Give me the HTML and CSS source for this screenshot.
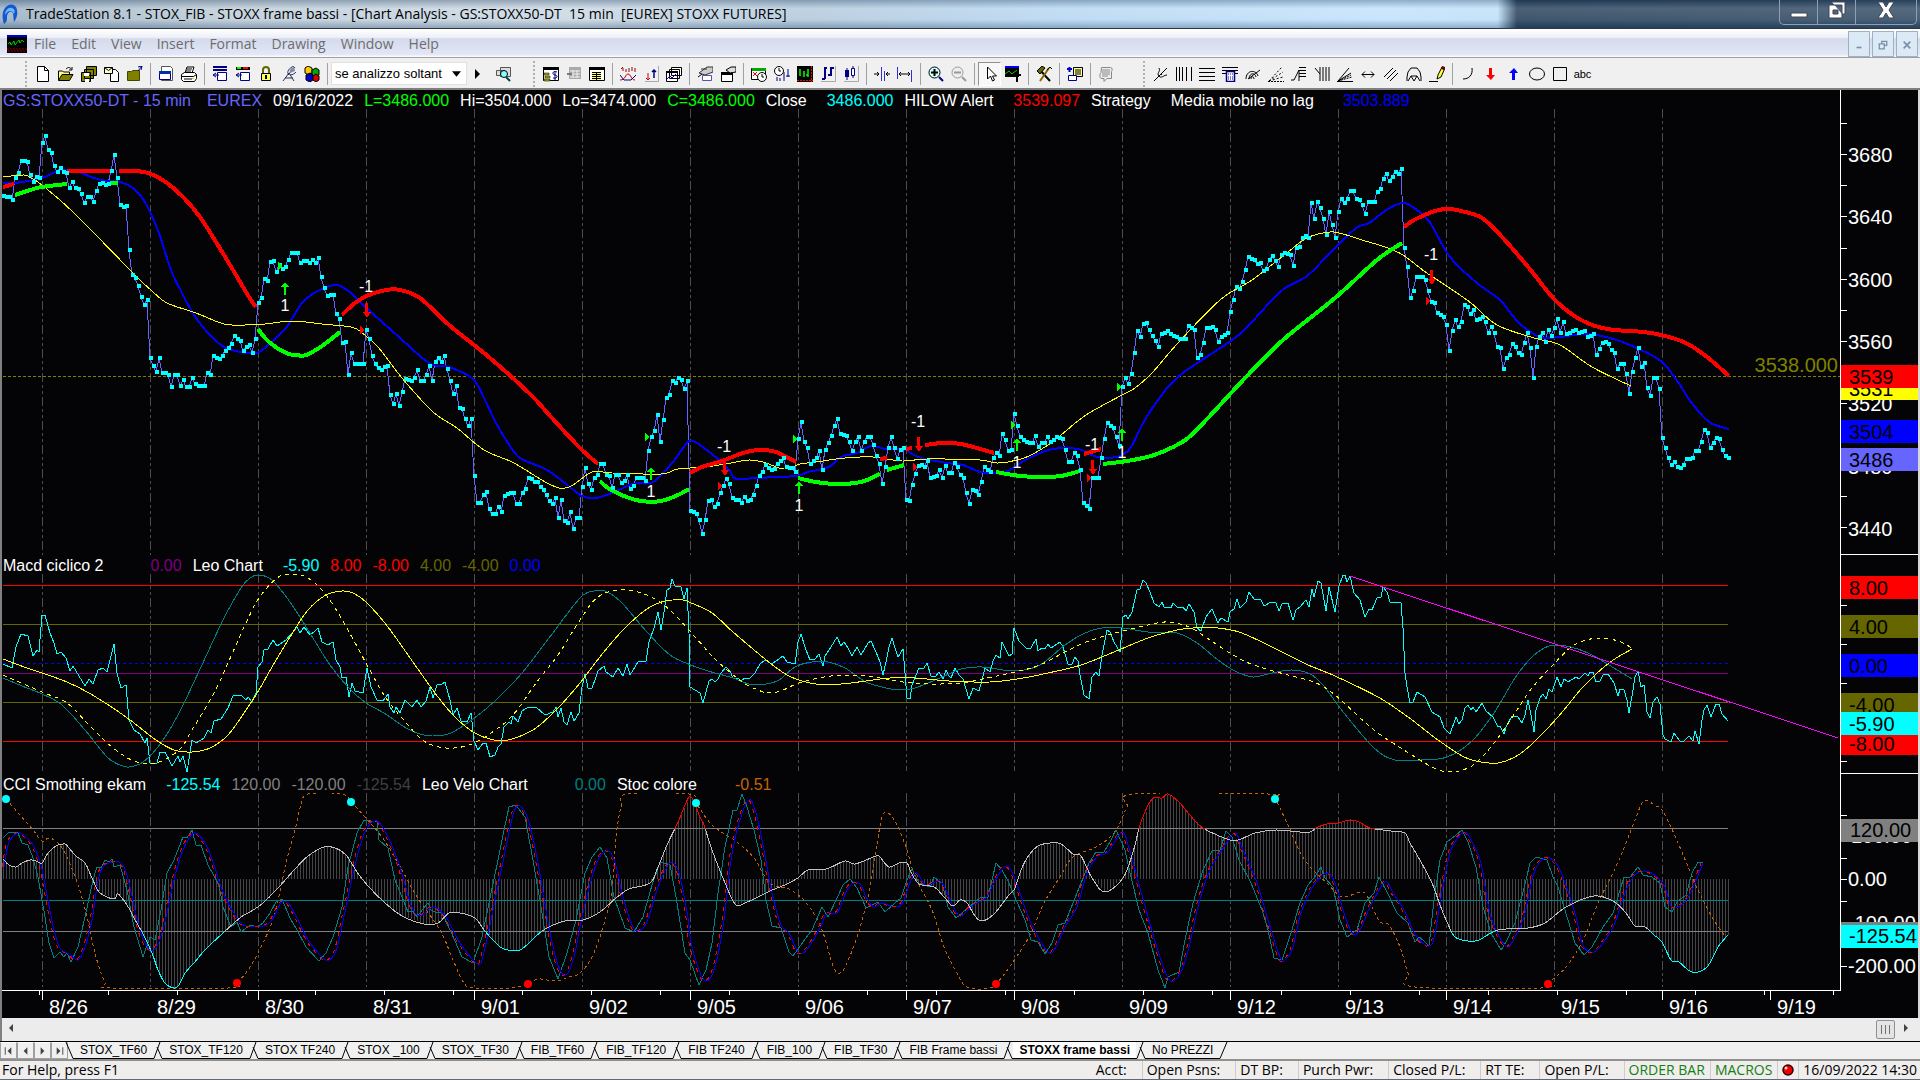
FILE: index.html
```
<!DOCTYPE html>
<html lang="en">

<head>
  <meta charset="UTF-8">
  <meta name="viewport" content="width=device-width, initial-scale=1.0">
  <title>TradeStation 8.1 - STOX_FIB</title>
  <link rel="stylesheet" href="styles.css">
</head>

<body>
  <!-- Toolbar icon set -->
  <svg class="sprite" aria-hidden="true">
    <symbol id="i-new" viewBox="0 0 16 16"><path d="M2.500 .5h7l4 4v11h-11z" fill="#fff" stroke="#000"/><path d="M9.500 .5v4h4" fill="none" stroke="#000"/></symbol>
    <symbol id="i-open" viewBox="0 0 16 16"><path d="M.5 14V5h4l1 1h6v2" fill="#ff8" stroke="#000"/><path d="M.5 14.500 4 8.500h11l-3.500 6z" fill="#808000" stroke="#000"/><path d="M8 3c2-2 4-2 5 0m1-2v3h-3" fill="none" stroke="#000"/></symbol>
    <symbol id="i-saveall" viewBox="0 0 16 16"><path d="M5.500 .5h10v9h-10zM3.500 3.500h9v9h-9zM.5 6.500h9v9h-9z" fill="#808000" stroke="#000"/><path d="M3 7h5v3H3zM4 13h4v3H4z" fill="#fff"/></symbol>
    <symbol id="i-mail" viewBox="0 0 16 16"><path d="M6.500 3.500h5l3 3v9h-8z" fill="#fff" stroke="#000"/><path d="M.5 1.500h8v6h-8z" fill="#ffc" stroke="#000"/><path d="m.5 1.500 4 3 4-3" fill="none" stroke="#000"/></symbol>
    <symbol id="i-folder" viewBox="0 0 16 16"><path d="M.5 5.500h4l1-1h7v10H.5z" fill="#808000" stroke="#440"/><path d="m11 1 4-1-1 4M15 0l-4 5" fill="none" stroke="#000080"/></symbol>
    <symbol id="i-window" viewBox="0 0 16 16"><path d="M3.500 .5h9l2 2v12h-11z" fill="#fff" stroke="#555"/><path d="M1.500 5.500h11v8h-11z" fill="#fff" stroke="#000080"/><path d="M1 5h12v3H1z" fill="#0030a0"/></symbol>
    <symbol id="i-print" viewBox="0 0 16 16"><path d="m4 7 2-6h7l-2 6M.5 8.500l3-2h10l2 2v4l-2 3h-11l-2-2z" fill="#fff" stroke="#000"/><path d="M.5 10.500h12l3-2M6 3h5M5 5h5m-7 8h8" stroke="#000" fill="none"/><path d="M11 12h2v1h-2z" fill="#cc0"/></symbol>
    <symbol id="i-insert" viewBox="0 0 16 16"><path d="M1 1h14M1 4h14" stroke="#000080" stroke-width="2"/><path d="M5.500 6.500h9v8h-9zM1 9h6M1 9l3-2M1 9l3 2" fill="#fff" stroke="#000080"/></symbol>
    <symbol id="i-insert2" viewBox="0 0 16 16"><path d="M1 1h14v3H1z" fill="#000"/><path d="M2 1h4v2H2z" fill="#0f0"/><path d="M8 1h5v2H8z" fill="red"/><path d="M5.500 6.500h9v8h-9zM1 9h6M1 9l3-2M1 9l3 2" fill="#fff" stroke="#000080"/></symbol>
    <symbol id="i-lock" viewBox="0 0 16 16"><path d="M5 8V4c0-4 6-4 6 0v4" fill="none" stroke="#660" stroke-width="2"/><path d="M3.500 7.500h9v7h-9z" fill="#ff6" stroke="#000"/><path d="M8 9v4" stroke="#000" stroke-width="2"/></symbol>
    <symbol id="i-dish" viewBox="0 0 16 16"><path d="m2 15 6-8 5 8M4 12h8M8 9c-3-3 0-7 5-9M9 9c3 0 5-2 6-3M7 9l7-8" fill="none" stroke="#235"/><path d="M9 7c-1-3 1-5 4-6l1 4z" fill="#88a"/></symbol>
    <symbol id="i-cubes" viewBox="0 0 16 16"><path d="m1 2 3-2 4 2v5L5 9 1 7z" fill="#fc0" stroke="#000"/><path d="m8 4 4-2 3 2v5l-3 2-4-2z" fill="#0a0" stroke="#000"/><path d="m2 9 4-2 3 2v5l-3 2-4-2z" fill="#00c" stroke="#000"/><path d="m9 10 3-2 3 2v4l-3 2-3-2z" fill="#d00" stroke="#000"/></symbol>
    <symbol id="i-find" viewBox="0 0 16 16"><path d="M1.500 4.500h8v5h-8zM5.500 1.500h10v9h-10z" fill="#ddd" stroke="#555"/><circle cx="9" cy="8" r="3.500" fill="#8ff" stroke="#000"/><path d="m11 11 4 4" stroke="#045" stroke-width="2"/></symbol>
    <symbol id="i-money" viewBox="0 0 16 16"><path d="M.5 1.500h15v13H.5z" fill="#fff" stroke="#000"/><path d="M0 1h16v3H0z"/><path d="M1 7h5v2H1zm1 3h5v2H2zm-1 3h6v2H1z" fill="#aa0" stroke="#000" stroke-width=".5"/><path d="M14 6c-5-2-5 3-2 3s3 4-2 3m2-7v9" fill="none" stroke="#000080"/></symbol>
    <symbol id="i-grid" viewBox="0 0 16 16"><path d="M3 1h12v12H3z" fill="#aaa"/><path d="M4 5h10M4 8h10M4 11h10M7 4v8m4-8v8" stroke="#eee"/><path d="M1 7h5v2H1z" fill="#777"/></symbol>
    <symbol id="i-table" viewBox="0 0 16 16"><path d="M.5 1.500h15v13H.5z" fill="#fff" stroke="#000"/><path d="M0 1h16v3H0z"/><path d="M3 6h9v8H3z" fill="#ff6"/><path d="M3 6.500h9m-9 2h9m-9 2h9m-9 2h9M7.500 6v9" stroke="#000"/></symbol>
    <symbol id="i-study" viewBox="0 0 16 16"><path d="m1 3 2-2m0 4V2m3 4V3m3-1v4m3-5v4m3-3v4" stroke="#900" fill="none"/><path d="M0 14c6 0 5-6 8-6s3 6 7 6" fill="none" stroke="#c00"/><path d="m0 9 4 5h7l5-5" fill="none" stroke="#000080"/></symbol>
    <symbol id="i-updown" viewBox="0 0 16 16"><path d="M15.500 0v15.500H2" stroke="#aaa" fill="none"/><path d="M5 7v7m-2-2 2 2 2-2" stroke="#c00" fill="none"/><path d="M11 12V4M9 6l2-2 2 2" stroke="#000080" stroke-width="1.500" fill="none"/></symbol>
    <symbol id="i-stack" viewBox="0 0 16 16"><path d="M5.500 1.500h10v8h-10zM3.500 3.500h10v9h-10zM.5 5.500h11v10H.5z" fill="#fff" stroke="#000"/><path d="M0 5h12v2H0z"/><path d="m1 13 3-3 2 2 4-4" stroke="#00c" fill="none"/></symbol>
    <symbol id="i-hand" viewBox="0 0 16 16"><path d="m2 7 8-6h6v5l-8 3zM4 3h6" fill="#ccc" stroke="#333"/><path d="M5.500 9.500h9v5h-9z" fill="#fff" stroke="#55a"/><path d="m1 11 4-3" stroke="#000"/></symbol>
    <symbol id="i-hand2" viewBox="0 0 16 16"><path d="M1.500 6.500h11v9h-11z" fill="#fff" stroke="#000"/><path d="M1 6h12v3H1z" fill="#000"/><path d="m6 4 5-3h5v5l-6 1z" fill="#ddd" stroke="#000"/></symbol>
    <symbol id="i-calendar" viewBox="0 0 16 16"><path d="M.5 2.500h14v11H.5z" fill="#fff" stroke="#000"/><path d="M1 2h14v3H1z" fill="#0a0"/><path d="m2 6 4 4m0-4-4 4" stroke="red"/><circle cx="11" cy="11" r="4.500" fill="#fff" stroke="#000"/><path d="M11 8v3h2" stroke="#000" fill="none"/></symbol>
    <symbol id="i-clock" viewBox="0 0 16 16"><circle cx="5" cy="5" r="4.500" fill="#fff" stroke="#000"/><path d="M5 2v3h2" stroke="#000" fill="none"/><path d="M3 11v4m3-3v3m4-9v9m4-12v8m-2-1h4" stroke="#000080" fill="none"/></symbol>
    <symbol id="i-bars" viewBox="0 0 16 16"><path d="M0 0h16v16H0z"/><path d="M3 3v7m4-5v6m4-8v8m-2-2h2" stroke="#0f0" stroke-width="1.500"/><path d="M0 14.500h16M14.500 0v16" stroke="red" stroke-dasharray="2 1"/></symbol>
    <symbol id="i-ohlc" viewBox="0 0 16 16"><path d="M15.500 0v15.500H1" stroke="#aaa" fill="none"/><path d="M5 2v11m-3 0h3m-1-11h3M11 1v9M8 9h3m0-7h3" stroke="#000080" stroke-width="2" fill="none"/></symbol>
    <symbol id="i-candle" viewBox="0 0 16 16"><path d="M15.500 0v15.500H1" stroke="#aaa" fill="none"/><path d="M4 2v12M10 0v12" stroke="#000080"/><path d="M2 4h4v7H2z" fill="#000080"/><path d="M8.500 2.500h3v7h-3z" fill="#fff" stroke="#000080"/></symbol>
    <symbol id="i-narrow" viewBox="0 0 16 16"><path d="M0 8h5M3 6l2 2-2 2m13-2h-4m2-2-2 2 2 2" stroke="#000" fill="none"/><path d="M7.500 1v14m3-10v10" stroke="#3030d0"/></symbol>
    <symbol id="i-widen" viewBox="0 0 16 16"><path d="M2 8h11M4 6 2 8l2 2m7-4 2 2-2 2" stroke="#000" fill="none"/><path d="M.5 1v12m14-9v12" stroke="#3030d0"/></symbol>
    <symbol id="i-zoomin" viewBox="0 0 16 16"><circle cx="6.500" cy="6.500" r="5.500" fill="#cff" stroke="#000"/><path d="M3 6.500h7M6.500 3v7" stroke="#000" stroke-width="2"/><path d="m11 11 4 4" stroke="#000080" stroke-width="2"/></symbol>
    <symbol id="i-zoomout" viewBox="0 0 16 16"><circle cx="6.500" cy="6.500" r="5.500" fill="#eee" stroke="#999"/><path d="M3 6.500h7" stroke="#999" stroke-width="2"/><path d="m11 11 4 4" stroke="#999" stroke-width="2"/></symbol>
    <symbol id="i-pointer" viewBox="0 0 16 16"><path d="M5.500 1v12l3-3 2 5 2-1-2-4h4z" fill="#fff" stroke="#000"/></symbol>
    <symbol id="i-charttext" viewBox="0 0 16 16"><path d="M0 0h14v11H0z"/><path d="M0 0h14v2H0z" fill="#00f"/><path d="m0 8 4-3 3 3 5-4" stroke="#0c0" fill="none"/><path d="M8 9h8m-4 0v7" stroke="#000" stroke-width="2"/></symbol>
    <symbol id="i-tools" viewBox="0 0 16 16"><path d="m3 3 11 12" stroke="#000" stroke-width="2"/><path d="M1 5 6 0l3 2-5 6z" fill="#660" stroke="#000"/><path d="m13 2-9 13" stroke="#860" stroke-width="2"/><path d="m11 4 3-3 2 2" stroke="#000" fill="none"/></symbol>
    <symbol id="i-addsheet" viewBox="0 0 16 16"><path d="M0 3h5M2.500 1v5" stroke="#00c" stroke-width="2"/><path d="M6.500 1.500h9v9h-9z" fill="#ff9" stroke="#000"/><path d="M8 4h6M8 6h6M8 8h6" stroke="#000"/><path d="M1.500 9.500h8v5h-8z" fill="#fff" stroke="#000080"/></symbol>
    <symbol id="i-note" viewBox="0 0 16 16"><path d="M3.500 1.500h9c2 0 2 3 1 4v7H9l-3 3v-3H3c-2-2-1-5 0-6z" fill="#eee" stroke="#888"/><path d="M4 4h8M4 6h8M4 8h8m-8 2h6" stroke="#888"/></symbol>
    <symbol id="i-fork" viewBox="0 0 16 16"><path d="m1 15 5-5m0 0c-3-3 2-4 0-8m0 8c2 3 5-1 8-1M6 10l8-8M8 8l1 1" fill="none" stroke="#000"/></symbol>
    <symbol id="i-vlines" viewBox="0 0 16 16"><path d="M.5 1v14m3-14v14m3-14v14m4-14v14m5-14v14" stroke="#000"/></symbol>
    <symbol id="i-hlines" viewBox="0 0 16 16"><path d="M0 2.500h16m-16 4h16m-16 4h16m-16 4h16" stroke="#000"/></symbol>
    <symbol id="i-calc" viewBox="0 0 16 16"><path d="M0 1.500h16m-16 3h16m-16 3h16" stroke="#000"/><path d="M4.500 5.500h8v10h-8z" fill="#fff" stroke="#000080" stroke-width="1.500"/><path d="M6 8h5m-5 3h5m-5 2h5" stroke="#000080" stroke-dasharray="1 1"/></symbol>
    <symbol id="i-arcs" viewBox="0 0 16 16"><path d="M1 13c0-9 10-10 12-3M4 13c0-6 6-7 7-2M6 13c0-3 3-3 3 0M3 13 15 4" fill="none" stroke="#000"/></symbol>
    <symbol id="i-fan" viewBox="0 0 16 16"><path d="M0 15.500h16" stroke="#000" stroke-dasharray="2 1"/><path d="M1 15 14 1M1 15l14-9M1 15l14-4" stroke="#000" stroke-dasharray="2 2"/></symbol>
    <symbol id="i-levels" viewBox="0 0 16 16"><path d="M0 14h3l5-10v11M8 1.500h7M8 4.500h7m-7 3h7m-7 3h7" fill="none" stroke="#000"/></symbol>
    <symbol id="i-timefib" viewBox="0 0 16 16"><path d="m1 2 5 6V1m0 7v7m3-14v14m3-14v14m3-14v14" fill="none" stroke="#000"/></symbol>
    <symbol id="i-fan2" viewBox="0 0 16 16"><path d="M0 15.500h16M1 15 12 2M1 15l13-8" stroke="#000" fill="none"/><path d="m1 15 14-4M2 15l12-6" stroke="#000" stroke-dasharray="2 1"/></symbol>
    <symbol id="i-hline" viewBox="0 0 16 16"><path d="M2 8.500h12m-9-3-3 3 3 3m6-6 3 3-3 3" stroke="#000" fill="none"/></symbol>
    <symbol id="i-parallel" viewBox="0 0 16 16"><path d="M1 11 10 2M4 13l9-9m-6 11 8-8" stroke="#000"/></symbol>
    <symbol id="i-gann" viewBox="0 0 16 16"><path d="M1 15v-4l1-5 3-4h6l3 4 1 5v4M2 15l3-5 3 5 3-5 3 5M5 10h6" fill="none" stroke="#000"/></symbol>
    <symbol id="i-pencil" viewBox="0 0 16 16"><path d="M0 15.500h9M8 13l1-4 4-8 3 1-4 9z" fill="#ff3" stroke="#000"/><path d="m13 0 3 1-1 3-3-1z" fill="#600"/></symbol>
    <symbol id="i-curve" viewBox="0 0 16 16"><path d="M3 13c6 0 10-4 9-11" fill="none" stroke="#000"/></symbol>
    <symbol id="i-down" viewBox="0 0 16 16"><path d="M6 2h3v7h3l-4 5-5-5h3z" fill="red"/></symbol>
    <symbol id="i-up" viewBox="0 0 16 16"><path d="M6 14h3V7h3L8 2 3 7h3z" fill="#00f"/></symbol>
    <symbol id="i-ellipse" viewBox="0 0 16 16"><ellipse cx="8" cy="8" rx="7.500" ry="6" fill="none" stroke="#000"/></symbol>
    <symbol id="i-rect" viewBox="0 0 16 16"><path d="M1.500 1.500h13v13h-13z" fill="none" stroke="#000"/></symbol>
  </svg>

  <header class="title-bar">
    <svg class="app-logo" viewBox="0 0 16 26" aria-hidden="true">
      <path d="M2 23C0 17 0 11 3 7c3-4 8-5 11-1 2 4 2 10-2 15-1-5 0-8-2-10-3-1-5 2-5 5 0 3 0 5-3 7z" fill="#1457d0"/>
      <path d="M3 14c0-4 3-8 7-7 3 1 3 3 2 6-2-4-6-4-9 1z" fill="#6db8ff"/>
    </svg>
    <h1>TradeStation 8.1 - STOX_FIB - STOXX frame bassi - [Chart Analysis - GS:STOXX50-DT&nbsp; 15 min&nbsp; [EUREX] STOXX FUTURES]</h1>
    <div class="window-buttons">
      <button type="button" aria-label="Minimize"><svg viewBox="0 0 24 20"><path d="M4 13h16v4H4z" fill="#fff" stroke="#445"/></svg></button>
      <button type="button" aria-label="Restore"><svg viewBox="0 0 24 20"><path d="M7 2h13v12h-3M4 5h13v13H4zM8 10h5v4H8z" fill="#fff" fill-rule="evenodd" stroke="#445"/></svg></button>
      <button type="button" class="close" aria-label="Close"><svg viewBox="0 0 24 20"><path d="M4 2h5l3 5 3-5h5l-5 8 5 8h-5l-3-5-3 5H4l5-8z" fill="#fff" stroke="#445"/></svg></button>
    </div>
  </header>

  <nav class="menu-bar" aria-label="Main menu">
    <svg class="chart-logo" viewBox="0 0 20 18" aria-hidden="true">
      <path d="M0 0h20v18H0z"/><path d="M0 0h20v2H0z" fill="#00c"/><path d="m1 9 2-2 1 3 3-4 1 4 4-5 1 3 2-3 2 2" fill="none" stroke="#0c0"/><path d="M0 14h20M1 16h18" stroke="#900" stroke-dasharray="2 1"/>
    </svg>
    <button type="button">File</button>
    <button type="button">Edit</button>
    <button type="button">View</button>
    <button type="button">Insert</button>
    <button type="button">Format</button>
    <button type="button">Drawing</button>
    <button type="button">Window</button>
    <button type="button">Help</button>
    <div class="mdi-buttons">
      <button type="button" aria-label="Minimize chart"><svg viewBox="0 0 12 12"><path d="M3 9h6" stroke="#7890a8" stroke-width="2"/></svg></button>
      <button type="button" aria-label="Restore chart"><svg viewBox="0 0 12 12"><path d="M4.500 4V1.500h6v5H8M1.500 4.500h6v6h-6z" fill="none" stroke="#7890a8" stroke-width="1.500"/></svg></button>
      <button type="button" aria-label="Close chart"><svg viewBox="0 0 12 12"><path d="m2 2 8 8m0-8-8 8" stroke="#7890a8" stroke-width="2"/></svg></button>
    </div>
  </nav>

  <div class="toolbar" role="toolbar" aria-label="Toolbar">
    <div class="tool-group first">
      <button type="button" aria-label="New"><svg><use href="#i-new"/></svg></button>
      <button type="button" aria-label="Open"><svg><use href="#i-open"/></svg></button>
      <button type="button" aria-label="Save all"><svg><use href="#i-saveall"/></svg></button>
      <button type="button" aria-label="Mail"><svg><use href="#i-mail"/></svg></button>
      <button type="button" aria-label="Close folder"><svg><use href="#i-folder"/></svg></button>
      <span class="sep"></span>
      <button type="button" aria-label="New window"><svg><use href="#i-window"/></svg></button>
      <button type="button" aria-label="Print"><svg><use href="#i-print"/></svg></button>
      <span class="sep"></span>
      <button type="button" aria-label="Insert row"><svg><use href="#i-insert"/></svg></button>
      <button type="button" aria-label="Insert symbol"><svg><use href="#i-insert2"/></svg></button>
      <button type="button" aria-label="Lock"><svg><use href="#i-lock"/></svg></button>
      <button type="button" aria-label="Data feed"><svg><use href="#i-dish"/></svg></button>
      <button type="button" aria-label="Components"><svg><use href="#i-cubes"/></svg></button>
      <span class="sep"></span>
      <select class="symbol-select" aria-label="Symbol">
        <option>se analizzo soltant</option>
      </select>
      <button type="button" class="go" aria-label="Go"><svg viewBox="0 0 16 16"><path d="m6 3 5 5-5 5z"/></svg></button>
      <button type="button" class="find" aria-label="Symbol lookup"><svg><use href="#i-find"/></svg></button>
    </div>

    <div class="tool-group second">
      <button type="button" aria-label="Account"><svg><use href="#i-money"/></svg></button>
      <button type="button" aria-label="Grid" disabled><svg><use href="#i-grid"/></svg></button>
      <button type="button" aria-label="Data table"><svg><use href="#i-table"/></svg></button>
      <span class="sep"></span>
      <button type="button" aria-label="Insert study"><svg><use href="#i-study"/></svg></button>
      <button type="button" aria-label="Insert signal"><svg><use href="#i-updown"/></svg></button>
      <button type="button" aria-label="Charts"><svg><use href="#i-stack"/></svg></button>
      <span class="sep"></span>
      <button type="button" aria-label="Format analysis"><svg><use href="#i-hand"/></svg></button>
      <button type="button" aria-label="Format window"><svg><use href="#i-hand2"/></svg></button>
      <span class="sep"></span>
      <button type="button" aria-label="Date range"><svg><use href="#i-calendar"/></svg></button>
      <button type="button" aria-label="Interval"><svg><use href="#i-clock"/></svg></button>
      <button type="button" aria-label="Bar style"><svg><use href="#i-bars"/></svg></button>
      <button type="button" aria-label="OHLC bars"><svg><use href="#i-ohlc"/></svg></button>
      <button type="button" aria-label="Candles"><svg><use href="#i-candle"/></svg></button>
      <span class="sep"></span>
      <button type="button" aria-label="Decrease spacing"><svg><use href="#i-narrow"/></svg></button>
      <button type="button" aria-label="Increase spacing"><svg><use href="#i-widen"/></svg></button>
      <span class="sep"></span>
      <button type="button" aria-label="Zoom in"><svg><use href="#i-zoomin"/></svg></button>
      <button type="button" aria-label="Zoom out" disabled><svg><use href="#i-zoomout"/></svg></button>
      <span class="sep"></span>
      <button type="button" class="pressed" aria-label="Pointer" aria-pressed="true"><svg><use href="#i-pointer"/></svg></button>
      <button type="button" aria-label="Text on chart"><svg><use href="#i-charttext"/></svg></button>
      <span class="sep"></span>
      <button type="button" aria-label="Tools"><svg><use href="#i-tools"/></svg></button>
      <span class="sep"></span>
      <button type="button" aria-label="Add sheet"><svg><use href="#i-addsheet"/></svg></button>
      <span class="sep"></span>
      <button type="button" aria-label="Note" disabled><svg><use href="#i-note"/></svg></button>
    </div>

    <div class="tool-group third">
      <button type="button" aria-label="Pitchfork"><svg><use href="#i-fork"/></svg></button>
      <button type="button" aria-label="Time cycles"><svg><use href="#i-vlines"/></svg></button>
      <button type="button" aria-label="Price levels"><svg><use href="#i-hlines"/></svg></button>
      <button type="button" aria-label="Calculator"><svg><use href="#i-calc"/></svg></button>
      <button type="button" aria-label="Fibonacci arcs"><svg><use href="#i-arcs"/></svg></button>
      <button type="button" aria-label="Speed lines"><svg><use href="#i-fan"/></svg></button>
      <button type="button" aria-label="Retracement"><svg><use href="#i-levels"/></svg></button>
      <button type="button" aria-label="Fibonacci time"><svg><use href="#i-timefib"/></svg></button>
      <button type="button" aria-label="Gann fan"><svg><use href="#i-fan2"/></svg></button>
      <button type="button" aria-label="Horizontal line"><svg><use href="#i-hline"/></svg></button>
      <button type="button" aria-label="Parallel lines"><svg><use href="#i-parallel"/></svg></button>
      <button type="button" aria-label="Gann square"><svg><use href="#i-gann"/></svg></button>
      <button type="button" aria-label="Trend line"><svg><use href="#i-pencil"/></svg></button>
      <span class="sep"></span>
      <button type="button" aria-label="Arc"><svg><use href="#i-curve"/></svg></button>
      <button type="button" aria-label="Down arrow"><svg><use href="#i-down"/></svg></button>
      <button type="button" aria-label="Up arrow"><svg><use href="#i-up"/></svg></button>
      <button type="button" aria-label="Ellipse"><svg><use href="#i-ellipse"/></svg></button>
      <button type="button" aria-label="Rectangle"><svg><use href="#i-rect"/></svg></button>
      <button type="button" class="text-tool">abc</button>
    </div>
  </div>

  <main class="chart">
    <section class="panel">
      <p class="legend">
        <span class="violet symbol">GS:STOXX50-DT - 15 min</span><span class="violet">EUREX</span><span>09/16/2022</span><span class="lime">L=3486.000</span><span>Hi=3504.000</span><span>Lo=3474.000</span><span class="lime">C=3486.000</span><span class="study">Close</span><span class="cyan">3486.000</span><span class="study">HILOW Alert</span><span class="red">3539.097</span><span class="study">Strategy</span><span class="study wide">Media mobile no lag</span><span class="blue">3503.889</span>
      </p>
      <svg class="plot" id="price" viewBox="2 109 1838 446" preserveAspectRatio="none"></svg>
    </section>
    <svg class="axis" viewBox="1840 90 78 465" preserveAspectRatio="none">
      <path class="axis-line" d="M1840.500 90V555M1840 554.500H1918"/>
      <path class="ticks" d="M1841 123.500h6m-6 31h6m-6 31h6m-6 31h6m-6 32h6m-6 31h6m-6 31h6m-6 31h6m-6 62h6m-6 93h6m-6 31h6"/>
      <g class="labels">
        <text x="1848" y="162">3680</text>
        <text x="1848" y="224">3640</text>
        <text x="1848" y="287">3600</text>
        <text x="1848" y="349">3560</text>
        <text x="1848" y="411">3520</text>
        <text x="1848" y="474">3480</text>
        <text x="1848" y="536">3440</text>
      </g>
      <g class="tags">
        <rect x="1841" y="377" width="77" height="23" fill="#ff0"/><text x="1849" y="396">3531</text>
        <rect x="1841" y="365" width="77" height="23" fill="#f00"/><text x="1849" y="384">3539</text>
        <rect x="1841" y="420" width="77" height="23" fill="#00f"/><text x="1849" y="439">3504</text>
        <rect x="1841" y="448" width="77" height="23" fill="#66f"/><text x="1849" y="467">3486</text>
      </g>
    </svg>

    <section class="panel">
      <p class="legend">
        <span class="study macd">Macd ciclico 2</span><span class="purple">0.00</span><span class="study">Leo Chart</span><span class="cyan">-5.90</span><span class="red">8.00</span><span class="red">-8.00</span><span class="olive">4.00</span><span class="olive">-4.00</span><span class="blue">0.00</span>
      </p>
      <svg class="plot" id="macd" viewBox="2 574 1838 200" preserveAspectRatio="none"></svg>
    </section>
    <svg class="axis" viewBox="1840 555 78 219" preserveAspectRatio="none">
      <path class="axis-line" d="M1840.500 555V774M1840 773.500H1918"/>
      <path class="ticks" d="M1841 605.500h6m-6 39h6m-6 39h6m-6 78h6"/>
      <g class="tags">
        <rect x="1841" y="576" width="77" height="23" fill="#f00"/><text x="1849" y="595">8.00</text>
        <rect x="1841" y="615" width="77" height="23" fill="#660"/><text x="1849" y="634">4.00</text>
        <rect x="1841" y="654" width="77" height="23" fill="#00f"/><text x="1849" y="673">0.00</text>
        <rect x="1841" y="693" width="77" height="23" fill="#660"/><text x="1849" y="712">-4.00</text>
        <rect x="1841" y="732" width="77" height="23" fill="#f00"/><text x="1849" y="751">-8.00</text>
        <rect x="1841" y="712" width="77" height="23" fill="#0ff"/><text x="1849" y="731">-5.90</text>
      </g>
    </svg>

    <section class="panel">
      <p class="legend">
        <span class="study">CCI Smothing ekam</span><span class="cyan">-125.54</span><span class="gray">120.00</span><span class="gray">-120.00</span><span class="dark">-125.54</span><span class="study velo">Leo Velo Chart</span><span class="teal">0.00</span><span class="study stoc">Stoc colore</span><span class="orange">-0.51</span>
      </p>
      <svg class="plot" id="cci" viewBox="2 793 1838 197" preserveAspectRatio="none">
        <defs>
          <!-- red above +120, cyan below -120 -->
          <linearGradient id="cci-zones" gradientUnits="userSpaceOnUse" x1="0" y1="793" x2="0" y2="993">
            <stop offset=".18" stop-color="#f00"/><stop offset=".18" stop-color="#c0c0c0"/>
            <stop offset=".69" stop-color="#c0c0c0"/><stop offset=".69" stop-color="#0ff"/>
          </linearGradient>
        </defs>
      </svg>
    </section>
    <svg class="axis" viewBox="1840 774 78 216" preserveAspectRatio="none">
      <path class="axis-line" d="M1840.500 774V990"/>
      <path class="ticks" d="M1841 815.500h6m-6 43h6m-6 21h6m-6 22h6m-6 65h6"/>
      <g class="labels">
        <text x="1851" y="843">100.00</text>
        <text x="1848" y="886">0.00</text>
        <text x="1848" y="930">-100.00</text>
        <text x="1848" y="973">-200.00</text>
      </g>
      <g class="tags">
        <rect x="1841" y="819" width="77" height="23" fill="#808080"/><text x="1850" y="837">120.00</text>
        <rect x="1841" y="922" width="77" height="23" fill="#808080"/>
        <rect x="1841" y="925" width="77" height="23" fill="#0ff"/><text x="1849" y="943">-125.54</text>
      </g>
    </svg>

    <svg class="time-axis" id="time-axis" viewBox="2 990 1916 28" preserveAspectRatio="none"></svg>
  </main>

  <div class="scrollbar">
    <button type="button" aria-label="Scroll left"><svg viewBox="0 0 16 16"><path d="m10 4-4 4 4 4z" fill="#444"/></svg></button>
    <div class="thumb"></div>
    <button type="button" aria-label="Scroll right"><svg viewBox="0 0 16 16"><path d="m6 4 4 4-4 4z" fill="#444"/></svg></button>
  </div>

  <nav class="tab-bar" aria-label="Workspaces">
    <div class="tab-nav">
      <button type="button" aria-label="First tab"><svg viewBox="0 0 16 16"><path d="M4.500 4v8" stroke="#444"/><path d="m11 4-4 4 4 4z" fill="#444"/></svg></button>
      <button type="button" aria-label="Previous tab"><svg viewBox="0 0 16 16"><path d="m10 4-4 4 4 4z" fill="#444"/></svg></button>
      <button type="button" aria-label="Next tab"><svg viewBox="0 0 16 16"><path d="m6 4 4 4-4 4z" fill="#444"/></svg></button>
      <button type="button" aria-label="Last tab"><svg viewBox="0 0 16 16"><path d="m5 4 4 4-4 4z" fill="#444"/><path d="M11.500 4v8" stroke="#444"/></svg></button>
    </div>
    <svg class="joint" viewBox="0 0 10 17"><path d="m2 0 7 16.500h1"/></svg>
    <button type="button" class="tab">STOX_TF60</button>
    <svg class="joint" viewBox="0 0 10 17"><path d="M0 16.500h1L7 0M4 5l5 11.500h1"/></svg>
    <button type="button" class="tab">STOX_TF120</button>
    <svg class="joint" viewBox="0 0 10 17"><path d="M0 16.500h1L7 0M4 5l5 11.500h1"/></svg>
    <button type="button" class="tab">STOX TF240</button>
    <svg class="joint" viewBox="0 0 10 17"><path d="M0 16.500h1L7 0M4 5l5 11.500h1"/></svg>
    <button type="button" class="tab">STOX _100</button>
    <svg class="joint" viewBox="0 0 10 17"><path d="M0 16.500h1L7 0M4 5l5 11.500h1"/></svg>
    <button type="button" class="tab">STOX_TF30</button>
    <svg class="joint" viewBox="0 0 10 17"><path d="M0 16.500h1L7 0M4 5l5 11.500h1"/></svg>
    <button type="button" class="tab">FIB_TF60</button>
    <svg class="joint" viewBox="0 0 10 17"><path d="M0 16.500h1L7 0M4 5l5 11.500h1"/></svg>
    <button type="button" class="tab">FIB_TF120</button>
    <svg class="joint" viewBox="0 0 10 17"><path d="M0 16.500h1L7 0M4 5l5 11.500h1"/></svg>
    <button type="button" class="tab">FIB TF240</button>
    <svg class="joint" viewBox="0 0 10 17"><path d="M0 16.500h1L7 0M4 5l5 11.500h1"/></svg>
    <button type="button" class="tab">FIB_100</button>
    <svg class="joint" viewBox="0 0 10 17"><path d="M0 16.500h1L7 0M4 5l5 11.500h1"/></svg>
    <button type="button" class="tab">FIB_TF30</button>
    <svg class="joint" viewBox="0 0 10 17"><path d="M0 16.500h1L7 0M4 5l5 11.500h1"/></svg>
    <button type="button" class="tab">FIB Frame bassi</button>
    <svg class="joint" viewBox="0 0 10 17"><path d="M0 16.500h1L7 0M4 5l5 11.500h1"/></svg>
    <button type="button" class="tab active" aria-current="page">STOXX frame bassi</button>
    <svg class="joint" viewBox="0 0 10 17"><path d="M0 16.500h1L7 0M4 5l5 11.500h1"/></svg>
    <button type="button" class="tab">No PREZZI</button>
    <svg class="joint" viewBox="0 0 10 17"><path d="M0 16.500h1L8 0"/></svg>
  </nav>

  <footer class="status-bar">
    <span class="help">For Help, press F1</span>
    <span>Acct:</span>
    <span>Open Psns:</span>
    <span>DT BP:</span>
    <span>Purch Pwr:</span>
    <span>Closed P/L:</span>
    <span>RT TE:</span>
    <span>Open P/L:</span>
    <span class="on">ORDER BAR</span>
    <span class="on">MACROS</span>
    <span class="lamp"><svg viewBox="0 0 12 12"><circle cx="6" cy="6" r="5" fill="#e00" stroke="#300" stroke-width="1.500"/><circle cx="4" cy="4" r="1.500" fill="#fcc"/></svg></span>
    <span class="clock">16/09/2022 14:30</span>
  </footer>

  <script src="chart.js"></script>
</body>

</html>
```
FILE: styles.css
```
:root {
  --face: #f0f0f0;
  --line: #a0a0a0;
  --ink: #000000;
  --plot: #040406;
  --ui-font: "Open Sans", "Noto Sans", sans-serif;
  --chart-font: "Liberation Sans", Arial, sans-serif;
}

* {
  box-sizing: border-box;
  margin: 0;
  padding: 0;
}

body {
  display: flex;
  flex-direction: column;
  min-height: 100vh;
  background: var(--face);
  color: var(--ink);
  font-family: var(--ui-font);
  font-size: 14px;
}

button {
  background: none;
  border: 0;
  color: inherit;
  font: inherit;
}

.sprite {
  position: absolute;
  width: 0;
  height: 0;
}

/* Title bar */
.title-bar {
  display: flex;
  align-items: center;
  height: 29px;
  padding: 0 3px 0 2px;
  border-bottom: 1px solid #30363c;
  background:
    linear-gradient(rgba(60, 80, 105, 0.35), rgba(255, 255, 255, 0.25) 30%, rgba(255, 255, 255, 0.2) 70%, rgba(60, 90, 125, 0.35)),
    linear-gradient(90deg, #8fa8bd, #b6c7d5 12%, #c3d3e0 30%, #aac3d8 42%, #afd2f0 55%, #bbdefc 72%, #b8dcf8 78%, #102c48 79%, #1c3854 100%);
}

.app-logo {
  width: 16px;
  height: 26px;
  margin-right: 8px;
}

.title-bar h1 {
  flex: 1;
  font-size: 14px;
  font-weight: 400;
  line-height: 20px;
  white-space: nowrap;
}

.window-buttons {
  display: flex;
  align-self: flex-start;
  height: 25px;
  border: 1px solid #8fa0b0;
  border-top: 0;
  border-radius: 0 0 5px 5px;
}

.window-buttons button {
  width: 38px;
  border-right: 1px solid #8fa0b0;
}

.window-buttons .close {
  width: 60px;
  border-right: 0;
}

.window-buttons svg {
  width: 24px;
  height: 20px;
}

/* Menu bar */
.menu-bar {
  display: flex;
  align-items: center;
  gap: 15px;
  height: 29px;
  padding: 2px 2px 0 7px;
  background: linear-gradient(#ffffff, #eef0f8 30%, #d5dbec 35%, #e2e6f6 90%, #ffffff);
  border-bottom: 1px solid var(--line);
  color: #6d6d6d;
}

.menu-bar > button {
  line-height: 20px;
}

.chart-logo {
  width: 20px;
  height: 18px;
  margin-right: -8px;
}

.mdi-buttons {
  display: flex;
  gap: 2px;
  margin-left: auto;
}

.mdi-buttons button {
  width: 22px;
  height: 26px;
  border: 1px solid #9db0c8;
  background: #dceaf6;
}

.mdi-buttons svg {
  width: 10px;
  height: 10px;
}

/* Toolbar */
.toolbar {
  display: flex;
  align-items: center;
  height: 32px;
  padding-top: 1px;
  border-bottom: 2px solid #808080;
}

.tool-group {
  display: flex;
  align-items: center;
  height: 26px;
  border-left: 2px dotted #b0b0b0;
}

.tool-group.first {
  margin-left: 25px;
  padding-left: 4px;
  width: 508px;
}

.tool-group.second {
  padding-left: 4px;
  width: 610px;
}

.tool-group.third {
  padding-left: 4px;
}

.tool-group button {
  display: flex;
  align-items: center;
  justify-content: center;
  flex: none;
  width: 23px;
  height: 24px;
}

.tool-group svg {
  width: 16px;
  height: 16px;
}

.tool-group .pressed {
  border: 1px solid #909090;
  border-right-color: #ffffff;
  border-bottom-color: #ffffff;
  background: #f8f8f8;
}

.tool-group .go {
  width: 20px;
}

.tool-group .find {
  margin-left: 4px;
}

.tool-group .text-tool {
  font-family: var(--chart-font);
  font-size: 11px;
}

.sep {
  flex: none;
  width: 8px;
  height: 22px;
  background: linear-gradient(90deg, transparent 4px, var(--line) 4px, var(--line) 5px, transparent 5px);
}

.symbol-select {
  appearance: none;
  width: 136px;
  height: 23px;
  padding: 0 20px 0 3px;
  border: 1px solid #e0e0e0;
  background: #ffffff url("data:image/svg+xml,%3Csvg xmlns='http://www.w3.org/2000/svg' viewBox='0 0 8 5'%3E%3Cpath d='M0 0h8L4 5z'/%3E%3C/svg%3E") right 5px center / 9px 6px no-repeat;
  color: var(--ink);
  font-family: var(--chart-font);
  font-size: 13px;
}

/* Chart window */
.chart {
  display: grid;
  flex: 1;
  grid-template-columns: minmax(0, 1fr) 78px;
  grid-template-rows: 465fr 219fr 216fr 28px;
  border-left: 2px solid #808080;
  border-right: 2px solid #d8d8d8;
  background: var(--plot);
  color: #ffffff;
  font-family: var(--chart-font);
}

.panel {
  display: flex;
  flex-direction: column;
  min-width: 0;
  min-height: 0;
}

.legend {
  display: flex;
  gap: 11px;
  height: 19px;
  padding-left: 1px;
  font-size: 16px;
  line-height: 22px;
  white-space: nowrap;
}

.legend .symbol {
  margin-right: 5px;
}

.legend .study {
  margin-right: 9px;
}

.legend .wide {
  margin-right: 18px;
}

.legend .macd,
.legend .velo {
  margin-right: 36px;
}

.legend .stoc {
  margin-right: 27px;
}

.violet { color: #6666ff; }
.lime { color: #00ff00; }
.cyan { color: #00ffff; }
.red { color: #ff0000; }
.blue { color: #0000ff; }
.purple { color: #800080; }
.olive { color: #666600; }
.gray { color: #808080; }
.dark { color: #404040; }
.teal { color: #008080; }
.orange { color: #c86400; }

.plot {
  flex: 1;
  width: 100%;
  min-height: 0;
}

.axis,
.time-axis {
  width: 100%;
  height: 100%;
  min-height: 0;
}

.time-axis {
  grid-column: 1 / -1;
}

.plot path {
  fill: none;
  shape-rendering: crispEdges;
  vector-effect: non-scaling-stroke;
}

.axis-line,
.ticks {
  fill: none;
  stroke: #ffffff;
  shape-rendering: crispEdges;
}

.labels text {
  fill: #ffffff;
  font-size: 20px;
}

.tags text {
  fill: #000000;
  font-size: 20px;
}

/* Plot series */
.plot .day { stroke: #4c4c4c; stroke-dasharray: 9 3 3 3 3 3; }
.plot .alert { stroke: #808000; stroke-dasharray: 3 2; }
.plot .close-line { stroke: #6666ff; }
.plot .close-dots { fill: #00ffff; }
.plot .average { stroke: #0000ff; stroke-width: 2; }
.plot .cycle { stroke: #ffff00; }
.plot .hilow-high { stroke: #ff0000; stroke-width: 4; }
.plot .hilow-low { stroke: #00ff00; stroke-width: 4; }
.plot .buy { fill: #00ff00; }
.plot .sell { fill: #ff0000; }
.plot .leo { stroke: #00ffff; }
.plot .fast { stroke: #008080; }
.plot .projected { stroke: #ffff00; stroke-dasharray: 4 4; }
.plot .trend { stroke: #ff00ff; }
.plot .level-red { stroke: #ff0000; }
.plot .level-olive { stroke: #666600; }
.plot .level-purple { stroke: #800080; }
.plot .level-gray { stroke: #808080; }
.plot .level-teal { stroke: #008080; }
.plot .level-blue { stroke: #0000ff; stroke-dasharray: 3 3; }
.plot .histogram { stroke: #444444; }
.plot .cci-line { stroke: url(#cci-zones); }
.plot .velo-line { stroke: #0000ff; }
.plot .velo-signal { stroke: #ff0000; stroke-dasharray: 4 5; }
.plot .stoc-line { stroke: #c86400; stroke-dasharray: 3 3; }

.signal {
  fill: #ffffff;
  font-size: 16px;
  text-anchor: middle;
}

.alert-price {
  fill: #808000;
  font-size: 20px;
  text-anchor: end;
}

/* Scrollbar */
.scrollbar {
  display: flex;
  align-items: center;
  height: 23px;
  padding: 0 5px 0 0;
  border-left: 2px solid #808080;
  background: #ececec;
}

.scrollbar button {
  width: 18px;
  height: 20px;
}

.scrollbar svg {
  width: 16px;
  height: 16px;
}

.thumb {
  width: 19px;
  height: 19px;
  margin-left: auto;
  margin-right: 2px;
  border: 1px solid #909090;
  border-radius: 2px;
  background: repeating-linear-gradient(90deg, #707070 0, #707070 1px, #e4e4e4 1px, #e4e4e4 4px) center / 9px 9px no-repeat #e4e4e4;
}

/* Workspace tabs */
.tab-bar {
  display: flex;
  height: 18px;
  border-top: 1px solid #000000;
  font-family: var(--chart-font);
  font-size: 12px;
}

.tab-nav {
  display: flex;
  margin-right: -4px;
}

.tab-nav button {
  display: flex;
  align-items: center;
  width: 17px;
  border: 1px solid var(--line);
  border-top-color: #ffffff;
}

.tab-nav svg {
  width: 16px;
  height: 16px;
}

.tab {
  padding: 0 6px;
  border-bottom: 1px solid #000000;
  line-height: 16px;
  white-space: nowrap;
}

.tab.active {
  background: #ffffff;
  font-weight: 700;
}

.joint {
  width: 10px;
  height: 17px;
  fill: none;
  stroke: #000000;
}

/* Status bar */
.status-bar {
  display: flex;
  align-items: center;
  height: 21px;
  border-top: 2px solid #909090;
  border-bottom: 1px solid #606878;
  background: #f0eded;
  line-height: 18px;
  white-space: nowrap;
}

.status-bar span {
  padding: 0 15px 0 4px;
  border-left: 1px solid #d0cccc;
}

.status-bar .help {
  flex: 1;
  padding-left: 2px;
  border-left: 0;
}

.status-bar .help + span {
  border-left: 0;
}

.status-bar .on {
  padding-right: 5px;
  color: #128012;
}

.status-bar .lamp {
  display: flex;
  padding: 0 4px;
}

.status-bar .lamp svg {
  width: 12px;
  height: 18px;
}

.status-bar .clock {
  padding-right: 3px;
}
```
FILE: chart.js
```
const SVG_NS = 'http://www.w3.org/2000/svg';
const BAR = 3;        // px between two 15 minute bars
const DAY = 108;      // px per session
const FIRST_DAY = 42;
const FIRST_BAR = 3;
const LAST_BAR = 1728;

const days = ['8/26', '8/29', '8/30', '8/31', '9/01', '9/02', '9/05', '9/06', '9/07', '9/08', '9/09', '9/12', '9/13', '9/14', '9/15', '9/16', '9/19'];

const closes = `3,196 9,197 12,200 15,178 18,173 21,161 24,161 27,162 30,175 33,182 36,177 39,178 42,143 45,136 48,150 51,153 54,166 57,172 60,168 63,172 66,173
69,188 72,182 75,188 78,189 81,194 84,203 87,197 90,197 93,202 96,191 99,184 102,183 105,185 108,184 111,171 114,155 117,178 120,205 123,207 126,206 129,250
132,275 135,278 138,286 141,297 144,305 147,300 150,358 153,366 156,372 159,358 162,373 165,373 168,375 171,387 174,375 177,375 180,386 183,380 186,387 189,387
192,378 195,384 198,386 204,386 207,373 210,375 213,356 216,358 219,359 222,356 225,351 228,348 231,344 234,336 237,339 240,341 243,351 246,347 249,345 252,353
255,339 258,303 261,298 264,279 267,281 270,262 273,261 276,272 279,265 282,269 285,267 288,260 291,253 297,253 300,263 303,261 306,261 309,263 312,260 315,263
318,258 321,277 324,288 327,296 330,295 333,295 336,314 339,319 342,343 345,342 348,375 351,353 354,364 363,364 366,330 369,339 372,356 375,364 378,368 381,370
384,367 387,366 390,395 393,404 396,394 399,406 402,392 405,379 411,381 414,378 417,370 420,381 423,381 426,375 429,366 432,381 435,362 438,358 441,362 444,356
447,369 450,381 453,394 456,386 459,408 462,409 465,419 468,426 471,419 474,476 477,503 480,503 483,495 486,492 489,509 492,514 495,514 498,507 501,512 504,496
507,494 510,493 513,493 516,504 519,504 522,493 525,489 528,478 531,479 534,482 537,482 540,487 543,490 546,495 549,501 552,504 555,498 558,518 561,500 564,521
567,523 570,512 573,529 576,518 579,518 582,487 585,468 588,484 591,490 594,478 597,475 600,464 603,464 606,475 609,476 612,488 615,475 618,475 621,483 624,481
627,475 630,489 633,486 636,478 642,478 645,481 648,451 651,437 654,431 657,415 660,442 663,420 666,398 669,395 672,381 675,383 678,378 681,380 684,389 687,381
690,511 693,512 696,514 699,520 702,534 705,520 708,501 711,500 714,507 717,504 720,493 723,486 726,479 729,484 732,498 735,500 738,500 741,503 744,497 747,501
750,500 753,495 756,486 759,476 762,472 765,465 768,468 771,470 774,469 777,464 780,461 783,458 786,467 792,468 795,472 798,439 801,422 804,442 807,448 810,464
813,461 816,458 819,451 822,470 825,450 828,443 831,436 834,426 837,419 840,434 846,436 849,442 852,451 855,442 858,437 861,451 864,442 867,437 870,437 873,445
876,456 879,464 882,484 885,467 888,448 891,437 894,448 897,459 900,450 903,448 906,500 909,501 912,485 915,474 918,466 921,465 924,467 927,461 930,478 936,476
939,470 942,478 945,466 948,473 951,473 954,463 957,467 960,475 963,478 966,493 969,504 972,490 975,491 978,495 981,482 984,467 990,472 993,458 996,453 999,456
1002,434 1005,440 1008,451 1011,450 1014,414 1017,426 1020,437 1026,442 1032,443 1035,436 1038,447 1041,443 1044,443 1047,437 1050,442 1056,437 1062,439 1065,450
1068,462 1071,462 1074,453 1077,456 1080,470 1083,503 1086,506 1089,509 1092,478 1098,478 1101,458 1104,439 1107,423 1113,428 1116,437 1119,446 1122,387 1125,378
1128,384 1131,374 1134,353 1137,331 1140,337 1143,324 1146,323 1149,330 1155,341 1158,347 1161,334 1167,331 1170,334 1179,339 1185,339 1188,326 1191,328 1194,330
1197,358 1200,355 1203,343 1206,328 1212,327 1215,330 1218,342 1221,337 1227,333 1230,312 1233,300 1236,287 1239,289 1242,282 1245,270 1248,257 1254,260 1257,264
1260,263 1263,271 1266,269 1269,260 1272,256 1275,261 1278,267 1281,255 1284,253 1290,255 1293,266 1296,248 1299,247 1302,238 1305,236 1308,238 1311,203 1314,219
1317,202 1320,208 1323,219 1326,235 1329,212 1332,225 1335,238 1338,212 1341,199 1344,203 1347,199 1350,191 1353,191 1356,199 1359,200 1362,205 1365,214 1368,202
1374,202 1377,192 1380,189 1383,179 1386,174 1389,181 1395,172 1398,174 1401,169 1404,248 1407,267 1410,298 1413,291 1416,277 1422,277 1425,280 1428,291 1431,302
1434,303 1437,313 1443,317 1446,325 1449,351 1452,331 1455,320 1458,327 1461,322 1464,305 1467,307 1470,314 1473,310 1476,320 1482,317 1485,322 1488,333 1491,327
1494,333 1497,347 1500,348 1503,369 1506,358 1509,355 1512,344 1515,347 1518,353 1521,355 1524,343 1527,333 1530,348 1533,378 1536,347 1539,337 1542,333 1545,342
1548,330 1551,336 1554,328 1557,319 1560,333 1563,322 1566,334 1572,331 1575,330 1578,333 1584,331 1587,337 1593,334 1596,355 1599,349 1602,343 1605,342 1608,344
1611,350 1614,353 1617,369 1620,364 1623,364 1626,374 1629,394 1632,372 1635,358 1638,348 1641,367 1644,363 1647,388 1650,396 1653,378 1656,378 1659,389 1662,438
1665,448 1668,458 1671,465 1674,462 1677,467 1680,468 1683,465 1686,459 1692,458 1695,451 1698,451 1701,442 1704,430 1707,433 1710,448 1713,443 1716,438 1719,439
1722,450 1725,456 1728,458`;

const average = `3,183 15,183 42,178 61,170 78,172 94,178 106,181 120,182 133,188 143,199 150,212 159,233 171,270 182,293 194,315 208,333 224,347 241,352 257,353 269,344
286,328 302,303 316,292 335,285 347,290 359,301 373,314 400,338 420,356 433,365 449,367 473,379 484,398 496,423 508,443 520,458 547,470 571,488 582,496 596,498
612,493 633,484 651,483 661,475 673,462 688,442 695,442 704,448 718,459 729,470 736,479 755,478 796,476 808,472 829,467 841,457 857,453 871,446 886,449 904,449
918,457 947,463 963,465 980,472 996,473 1008,471 1029,458 1053,449 1078,449 1094,456 1108,458 1122,455 1131,447 1142,425 1151,410 1168,387 1184,372 1205,358
1241,333 1280,292 1307,276 1330,253 1356,228 1369,223 1388,209 1403,203 1414,208 1429,221 1450,257 1477,283 1500,300 1518,322 1537,336 1547,338 1560,337 1586,334
1610,338 1639,349 1662,362 1678,382 1691,402 1709,422 1729,429`;

const cycle = `3,177 24,175 31,178 42,185 73,212 135,275 151,290 167,303 196,313 224,324 245,325 265,324 292,321 322,324 351,327 361,332 378,347 402,378 433,412
457,428 484,450 514,463 551,485 569,487 592,472 612,473 661,474 678,469 706,467 731,463 749,460 763,462 784,469 800,464 816,462 845,458 873,457 902,461 927,459
980,460 998,463 1024,458 1045,447 1061,435 1086,415 1122,395 1135,388 1152,373 1178,343 1220,300 1252,280 1283,256 1307,238 1330,232 1343,234 1362,240 1385,247
1403,255 1424,271 1445,285 1471,303 1497,325 1534,338 1560,345 1592,367 1631,386`;

const hilowHigh = [
  '3,187 14,184',
  '67,171 111,171',
  '119,171 137,171 151,174 167,183 184,198 200,217 216,242 233,270 249,297 256,307',
  '342,315 355,303 369,295 386,290 400,290 420,298 449,325 490,358 531,395 551,417 580,448 598,464',
  '690,473 702,467 722,461 743,453 759,450 776,452 796,462',
  '880,459 887,458',
  '906,449 912,448',
  '925,445 943,443 961,444 980,449 994,453',
  '1084,454 1101,449',
  '1404,227 1414,220 1435,211 1448,209 1461,211 1482,218 1503,238 1529,268 1555,300 1581,320 1607,329 1644,332 1665,336 1686,343 1707,357 1729,376',
];

const hilowLow = [
  '15,195 37,188 49,186 67,184',
  '110,183 118,183',
  '258,329 269,342 286,353 296,355 306,355 322,346 340,332',
  '600,481 608,488 624,496 641,501 661,501 678,495 689,489',
  '798,478 816,482 837,484 861,482 880,474',
  '887,470 904,465',
  '996,472 1020,476 1041,477 1061,476 1080,471',
  '1103,464 1127,461 1151,456 1171,448 1188,438 1208,418 1246,377 1283,340 1335,298 1377,260 1402,243',
];

// Strategy signals: x, arrow top, label baseline, entry marker x and y
const buys = [[285, 282, 311, 280, 266], [651, 467, 497, 647, 437], [799, 481, 511, 795, 439], [1017, 438, 468, 1013, 425], [1122, 428, 458, 1119, 387]];
const sells = [[366, 303, 292, 362, 330], [724, 461, 452, 720, 486], [918, 437, 427, 915, 467], [1092, 460, 450, 1089, 478], [1431, 270, 260, 1428, 301]];

const leo = `3,664 12,668 16,647 21,634 28,636 33,656 37,650 39,652 42,615 45,615 50,633 54,643 57,654 61,652 66,658 70,671 73,666 85,686 89,679 93,684 98,670 103,668
107,672 114,644 117,673 121,688 126,685 129,720 134,730 140,734 145,743 147,738 150,763 157,763 160,752 165,752 172,766 178,756 180,762 183,756 187,772 192,740
196,743 204,738 208,730 211,733 214,721 221,719 228,708 233,696 241,695 246,700 248,697 252,702 256,693 258,667 262,662 264,650 268,649 273,640 277,646 286,640
297,627 300,633 304,627 310,635 315,631 318,628 322,642 328,645 333,642 336,660 340,667 342,678 346,677 349,697 352,683 355,691 363,693 367,668 371,687 377,700
383,701 388,694 390,707 394,713 396,707 400,713 405,700 412,707 417,700 421,707 426,701 430,687 433,698 437,685 442,684 445,682 450,700 453,715 457,708 461,721
467,722 471,713 474,741 478,750 483,743 486,743 490,757 495,755 498,747 501,744 504,727 509,722 511,724 513,716 518,722 522,711 527,708 536,707 545,715 553,712
556,707 558,717 561,708 564,722 567,725 571,712 574,721 579,713 582,687 585,674 588,688 592,688 596,677 598,671 604,666 606,672 613,677 618,668 623,676 627,664
630,675 638,662 646,661 649,642 654,628 658,612 661,630 664,612 667,590 670,588 672,579 675,586 681,587 684,599 687,588 689,633 690,687 700,693 703,703 706,692
709,681 712,679 715,682 718,679 721,673 726,667 730,671 733,678 738,678 741,681 745,678 749,679 755,673 760,664 765,660 772,664 776,661 783,656 787,662 795,664
798,642 801,634 806,650 810,660 815,659 819,654 823,666 825,656 831,647 837,637 841,646 844,642 848,648 852,656 857,647 861,655 868,643 871,641 876,652 880,662
883,675 886,662 889,647 892,638 895,648 898,657 903,649 905,673 907,698 910,699 912,685 919,668 924,668 927,663 931,676 936,676 939,672 943,679 946,670 949,676
951,678 955,668 959,675 963,679 969,699 973,688 979,691 982,680 985,668 990,672 993,661 996,655 1000,658 1002,642 1009,656 1012,654 1014,628 1019,641 1026,648
1031,648 1036,639 1038,651 1042,648 1045,649 1048,644 1051,648 1060,642 1063,647 1068,664 1072,664 1075,657 1078,661 1080,675 1084,695 1089,699 1092,677
1096,672 1099,676 1102,655 1107,630 1110,632 1114,642 1120,652 1123,617 1126,615 1128,619 1132,612 1137,590 1140,589 1143,580 1146,583 1150,592 1154,603
1159,607 1162,602 1164,607 1171,608 1173,603 1177,607 1183,607 1186,611 1189,604 1194,612 1197,628 1201,631 1206,617 1212,609 1218,623 1221,618 1228,622
1230,612 1234,609 1237,599 1240,608 1246,602 1249,592 1254,599 1261,600 1264,606 1271,602 1276,603 1279,611 1282,604 1288,603 1293,620 1296,610 1300,607
1306,600 1309,607 1312,589 1314,597 1318,581 1321,583 1326,611 1329,587 1335,612 1339,586 1343,575 1345,575 1347,582 1350,576 1354,593 1360,600 1365,617
1369,609 1372,610 1377,598 1381,597 1383,587 1387,592 1390,602 1401,603 1403,628 1405,673 1407,687 1410,703 1413,702 1417,692 1425,697 1432,712 1440,717
1444,728 1450,734 1456,717 1459,724 1462,720 1465,708 1468,705 1471,710 1473,707 1476,712 1482,703 1486,711 1493,717 1498,727 1500,726 1504,734 1506,727
1512,716 1518,717 1522,723 1525,715 1528,700 1531,715 1534,732 1536,710 1540,698 1543,694 1546,699 1549,689 1552,692 1557,677 1561,687 1564,679 1568,682
1576,677 1579,679 1585,673 1588,676 1590,672 1593,672 1596,682 1600,681 1603,675 1608,674 1614,683 1618,696 1620,689 1624,690 1627,700 1629,713 1633,690
1635,677 1638,671 1641,687 1644,685 1647,712 1650,718 1653,702 1657,697 1660,704 1663,735 1665,739 1671,742 1674,733 1680,741 1684,741 1689,736 1693,741
1695,731 1699,744 1702,720 1704,710 1707,705 1711,717 1716,704 1719,704 1722,714 1728,721`;

const macdSlow = `3,659 27,668 42,673 67,682 89,693 116,710 134,723 156,740 174,750 192,752 210,748 228,735 246,710 259,690 272,667 290,637 308,610 326,595 342,591
353,593 366,602 388,627 415,665 438,697 455,717 473,732 487,738 502,741 518,737 536,728 558,708 580,683 603,653 625,628 647,609 665,601 683,600 689,602 712,613
733,632 770,663 791,677 816,684 841,684 866,681 890,678 915,678 949,681 990,682 1023,678 1048,673 1081,665 1114,652 1148,638 1177,630 1193,628 1218,628
1239,632 1264,643 1306,664 1335,676 1378,697 1408,717 1438,740 1464,757 1481,762 1498,763 1515,757 1532,744 1558,717 1583,687 1609,663 1632,649`;

const macdProjected = `3,675 42,692 67,703 89,725 112,747 134,761 156,763 179,750 192,730 214,693 228,663 246,623 259,598 277,578 290,574 308,578 326,595 344,623 366,663
384,695 402,718 424,741 446,748 469,745 491,733 513,715 536,683 558,655 580,620 598,597 621,590 647,595 670,610 696,638 716,660 741,681 758,690 770,693 783,690
799,683 824,677 849,675 874,677 903,682 932,684 961,683 982,679 1015,672 1040,665 1065,652 1089,641 1119,632 1148,625 1168,622 1189,627 1210,640 1230,653
1251,664 1284,674 1314,682 1331,692 1344,703 1374,730 1404,750 1434,768 1451,772 1468,768 1481,758 1498,738 1515,713 1532,688 1553,665 1570,648 1583,641
1600,638 1618,641 1632,648`;

const macdFast = `3,678 22,686 42,694 62,705 85,730 107,757 120,765 129,767 143,762 161,743 179,713 201,667 223,620 241,588 250,578 259,575 272,580 290,602 308,630
330,665 348,687 366,703 384,713 406,728 420,734 433,736 451,733 473,719 496,700 522,673 549,638 580,598 594,591 605,591 621,602 647,632 670,655 691,665 708,671
733,678 749,684 766,684 779,680 795,667 812,662 828,662 845,668 866,682 886,688 901,690 915,688 940,678 961,669 982,667 1015,671 1040,665 1065,645 1085,633
1102,628 1123,628 1148,632 1177,633 1197,643 1218,660 1235,671 1253,677 1272,673 1292,670 1310,674 1323,685 1344,713 1374,748 1395,760 1421,760 1447,757
1472,741 1494,713 1515,678 1532,657 1549,646 1566,646 1588,653 1609,665 1632,679`;

const cci = `3,859 9,865 16,867 22,863 30,860 36,861 42,863 48,853 56,846 65,844 69,848 76,856 85,863 92,878 100,893 114,899 118,894 127,905 134,918 143,934 152,953
158,970 165,983 174,988 179,985 185,973 194,963 205,950 223,933 241,917 250,912 263,903 279,887 295,869 308,856 324,847 335,848 346,855 357,872 368,886 384,902
402,916 424,924 438,923 449,913 460,913 475,918 484,930 496,943 504,949 520,950 536,936 547,928 565,921 583,920 600,912 616,898 629,889 650,883 658,867 667,845
679,820 685,805 691,797 700,817 704,825 712,850 723,878 735,904 745,903 770,891 787,884 798,878 808,870 826,869 845,861 855,864 876,856 880,857 889,867 899,863
907,863 911,872 919,884 934,887 944,897 953,906 960,900 967,903 975,916 982,921 994,914 1009,895 1015,888 1021,870 1029,855 1040,845 1058,843 1065,847
1073,854 1081,856 1092,878 1105,892 1123,878 1133,852 1141,822 1152,799 1162,798 1168,794 1179,802 1189,814 1203,828 1230,840 1241,839 1255,833 1276,830
1300,832 1310,832 1318,827 1327,824 1338,823 1350,820 1359,822 1370,828 1391,831 1405,833 1410,843 1421,862 1432,883 1440,905 1447,922 1455,937 1468,941
1479,940 1498,930 1528,928 1545,923 1566,907 1594,896 1613,901 1626,913 1635,926 1645,927 1654,935 1662,942 1671,960 1679,962 1692,972 1707,967 1718,947 1728,935`;

const velo = `4,867 9,842 18,833 25,836 33,845 41,865 47,895 54,930 60,948 69,954 78,960 85,947 92,920 100,873 112,862 123,865 129,883 138,923 145,943 154,950 163,930
174,880 183,850 194,833 205,843 214,865 223,892 237,918 246,926 263,926 272,920 281,903 288,903 297,918 308,940 321,956 329,960 337,948 346,907 357,857 366,830
377,821 388,837 400,867 411,905 420,916 433,907 446,917 460,943 478,964 484,952 493,910 504,857 513,815 520,806 529,822 538,863 549,927 558,965 566,975 574,957
580,927 589,888 598,860 608,851 615,862 623,897 632,925 638,931 647,922 658,887 670,863 679,873 688,918 691,943 699,970 706,981 714,970 723,927 731,860 739,823
749,800 756,813 764,850 772,893 781,925 789,933 799,953 808,948 820,928 827,913 837,913 847,890 854,883 861,885 866,897 874,907 882,903 895,907 903,902 911,880
917,873 926,885 940,881 949,897 955,910 961,916 973,905 986,898 994,883 1004,867 1011,870 1019,890 1031,923 1048,952 1056,947 1065,927 1077,907 1087,873
1098,856 1108,852 1122,832 1129,848 1137,877 1148,917 1160,957 1170,981 1181,972 1189,947 1199,903 1210,870 1222,850 1235,833 1243,850 1257,883 1268,920
1280,957 1285,960 1293,947 1301,913 1314,885 1327,873 1335,883 1344,913 1353,934 1361,928 1370,907 1385,882 1393,893 1404,910 1417,937 1432,944 1440,903
1449,857 1455,842 1465,832 1472,842 1481,863 1491,917 1506,946 1515,937 1524,917 1534,873 1545,858 1556,863 1564,880 1575,913 1583,945 1594,952 1605,940
1615,923 1626,890 1635,875 1645,871 1656,876 1665,887 1672,907 1684,903 1692,890 1703,863`;

const veloRaw = `3,838 9,832 18,833 22,843 28,845 33,858 38,877 45,917 49,943 54,958 60,952 64,957 67,953 71,962 78,947 85,917 93,880 97,867 101,868 105,860 109,862 112,859
114,867 120,865 127,890 134,927 143,957 150,937 155,940 161,910 167,873 174,860 183,837 187,838 192,830 196,845 201,845 208,865 219,885 223,907 231,927 237,922
241,932 250,925 257,927 263,923 270,913 276,902 282,899 290,918 297,930 306,947 319,961 326,953 333,937 342,907 348,867 357,833 364,820 377,822 379,840 388,848
395,880 402,897 408,912 413,911 417,917 422,910 428,903 431,910 435,912 442,913 451,932 462,957 473,963 482,937 489,903 498,860 504,830 509,807 516,805 525,817
533,860 542,913 549,957 558,979 567,953 576,920 585,873 592,857 600,847 607,858 614,897 625,928 634,932 643,917 652,885 660,862 670,865 676,897 685,953 690,960
699,985 706,970 712,943 718,893 725,847 733,810 737,810 742,794 747,807 754,830 761,860 766,900 772,926 781,928 789,952 793,956 803,942 812,930 822,907 828,917
837,898 843,885 850,879 857,888 866,908 878,902 885,912 895,903 901,898 907,880 912,869 919,883 930,887 934,877 942,883 948,907 956,918 969,907 980,898 988,897
996,863 1002,870 1009,883 1017,902 1025,920 1031,940 1038,942 1045,954 1052,943 1058,925 1065,923 1073,903 1081,883 1089,863 1096,852 1104,852 1110,842
1116,830 1125,850 1131,877 1139,910 1148,933 1158,970 1165,988 1168,977 1179,972 1185,940 1193,903 1203,870 1212,851 1220,850 1226,831 1232,837 1239,860
1251,883 1262,910 1268,930 1274,958 1282,960 1291,933 1300,903 1308,885 1314,878 1321,867 1325,878 1333,887 1340,920 1347,937 1357,930 1365,903 1374,893
1379,877 1387,892 1397,913 1408,923 1415,942 1419,937 1423,940 1429,946 1434,900 1440,860 1447,842 1455,836 1462,830 1468,842 1476,867 1483,907 1491,933
1501,950 1506,942 1515,923 1526,880 1530,863 1536,857 1547,860 1553,877 1558,887 1564,907 1575,943 1584,955 1592,947 1603,927 1613,913 1624,877 1630,877
1638,867 1643,875 1652,877 1660,883 1665,907 1672,912 1677,902 1686,895 1692,873 1698,862 1703,863`;

const stoc = `6,799 20,815 33,830 42,841 49,838 58,843 67,857 78,885 87,917 96,957 105,982 112,988 228,988 237,983 250,967 263,943 275,913 286,863 295,830 301,805
308,794 342,794 351,802 366,818 384,840 402,870 417,897 440,930 453,960 464,983 473,988 509,988 528,984 538,979 556,981 569,977 580,973 592,957 603,927 612,890
616,837 621,807 627,794 689,794 696,803 712,825 737,842 754,858 770,883 791,890 808,905 822,930 832,963 838,973 845,967 857,937 868,897 876,850 882,817 888,813
897,825 907,850 915,877 932,910 944,947 957,973 967,987 990,988 1002,977 1019,953 1031,933 1044,903 1060,877 1073,857 1094,848 1108,839 1118,827 1127,807
1135,794 1268,794 1275,799 1288,825 1299,850 1310,867 1327,883 1342,897 1363,892 1372,907 1380,922 1389,925 1400,947 1408,973 1415,987 1541,988 1548,983
1566,967 1583,940 1598,903 1611,877 1622,853 1635,820 1644,801 1656,806 1662,810 1671,827 1684,857 1697,888 1712,917 1724,935`;

const stocHighs = [[6, 799], [351, 802], [696, 803], [1275, 799]];
const stocLows = [[237, 983], [528, 984], [996, 984], [1548, 984]];

function parse(text) {
  return text.trim().split(/\s+/).map(pair => pair.split(',').map(Number));
}

function draw(svg, tag, attrs, text) {
  const node = document.createElementNS(SVG_NS, tag);
  for (const name in attrs) node.setAttribute(name, attrs[name]);
  if (text) node.textContent = text;
  svg.appendChild(node);
  return node;
}

function line(svg, className, text) {
  const d = 'M' + parse(text).map(([x, y]) => `${x} ${y}`).join('L');
  draw(svg, 'path', { class: className, d });
}

// Catmull-Rom spline through the points
function curve(svg, className, text, dx = 0) {
  const p = parse(text).map(([x, y]) => [x + dx, y]);
  let d = `M${p[0]}`;
  for (let i = 0; i < p.length - 1; i++) {
    const a = p[i - 1] || p[i];
    const b = p[i];
    const c = p[i + 1];
    const e = p[i + 2] || c;
    d += `C${b[0] + (c[0] - a[0]) / 6} ${b[1] + (c[1] - a[1]) / 6} ${c[0] - (e[0] - b[0]) / 6} ${c[1] - (e[1] - b[1]) / 6} ${c[0]} ${c[1]}`;
  }
  draw(svg, 'path', { class: className, d });
}

function valueAt(points, x) {
  const i = points.findIndex(p => p[0] >= x);
  if (i <= 0) return points[0][1];
  const [x0, y0] = points[i - 1];
  const [x1, y1] = points[i];
  return y0 + (y1 - y0) * (x - x0) / (x1 - x0);
}

function dayLines(svg, top, bottom) {
  for (let i = 0; i < days.length - 1; i++) {
    const x = FIRST_DAY + i * DAY + 0.5;
    draw(svg, 'path', { class: 'day', d: `M${x} ${top}V${bottom}` });
  }
}

function level(svg, className, y, right = LAST_BAR) {
  draw(svg, 'path', { class: className, d: `M3 ${y + 0.5}H${right}` });
}

function drawPrice() {
  const svg = document.getElementById('price');
  dayLines(svg, 109, 555);
  level(svg, 'alert', 376, 1840);
  draw(svg, 'text', { class: 'alert-price', x: 1838, y: 372 }, '3538.000');

  line(svg, 'close-line', closes);
  curve(svg, 'average', average);
  curve(svg, 'cycle', cycle);
  hilowHigh.forEach(part => curve(svg, 'hilow-high', part));
  hilowLow.forEach(part => curve(svg, 'hilow-low', part));

  const points = parse(closes);
  let dots = '';
  for (let x = FIRST_BAR; x <= LAST_BAR; x += BAR) {
    dots += `M${x - 1} ${Math.round(valueAt(points, x)) - 2}h4v4h-4z`;
  }
  draw(svg, 'path', { class: 'close-dots', d: dots });

  buys.forEach(([x, top, base, mx, my]) => {
    draw(svg, 'path', { class: 'buy', d: `M${x} ${top}l4 5h-3v8h-2v-8h-3z` });
    draw(svg, 'path', { class: 'buy', d: `M${mx - 2} ${my - 4}l5 4-5 4z` });
    draw(svg, 'text', { class: 'signal', x, y: base }, '1');
  });
  sells.forEach(([x, top, base, mx, my]) => {
    draw(svg, 'path', { class: 'sell', d: `M${x - 1} ${top}h3v9h3l-4 6-4-6h2z` });
    draw(svg, 'path', { class: 'sell', d: `M${mx - 2} ${my - 4}l5 4-5 4z` });
    draw(svg, 'text', { class: 'signal', x, y: base }, '-1');
  });
}

function drawMacd() {
  const svg = document.getElementById('macd');
  dayLines(svg, 574, 771);
  level(svg, 'level-red', 585);
  level(svg, 'level-olive', 624);
  level(svg, 'level-blue', 663);
  level(svg, 'level-purple', 673);
  level(svg, 'level-olive', 702);
  level(svg, 'level-red', 741);
  line(svg, 'leo', leo);
  curve(svg, 'fast', macdFast);
  curve(svg, 'projected', macdProjected);
  curve(svg, 'cycle', macdSlow);
  line(svg, 'trend', '1350,576 1838,738');
}

function drawCci() {
  const svg = document.getElementById('cci');
  const points = parse(cci);
  dayLines(svg, 793, 987);
  let bars = '';
  for (let x = FIRST_BAR; x <= LAST_BAR; x += BAR) {
    bars += `M${x + 0.5} 879V${valueAt(points, x)}`;
  }
  draw(svg, 'path', { class: 'histogram', d: bars });
  level(svg, 'level-gray', 828);
  level(svg, 'level-teal', 900);
  level(svg, 'level-gray', 931);
  curve(svg, 'stoc-line', stoc);
  line(svg, 'fast', veloRaw);
  curve(svg, 'velo-line', velo);
  curve(svg, 'velo-signal', velo, -2);
  curve(svg, 'cci-line', cci);
  stocHighs.forEach(([cx, cy]) => draw(svg, 'circle', { cx, cy, r: 4, fill: '#0ff' }));
  stocLows.forEach(([cx, cy]) => draw(svg, 'circle', { cx, cy, r: 4, fill: '#f00' }));
}

function drawTimeAxis() {
  const svg = document.getElementById('time-axis');
  const longTicks = [42, 258, 474, 690, 906, 1014, 1230, 1446, 1662, 1770];
  let ticks = 'M2 990.5H1841';
  longTicks.forEach(x => { ticks += `M${x + 0.5} 990v10`; });
  for (let i = 0; i < 27; i++) {
    ticks += `M${Math.round(39 + i * 69) + 0.5} 990v5`;
  }
  draw(svg, 'path', { class: 'ticks', d: ticks });
  const labels = draw(svg, 'g', { class: 'labels' });
  days.forEach((day, i) => draw(labels, 'text', { x: FIRST_DAY + i * DAY + 7, y: 1014 }, day));
}

drawPrice();
drawMacd();
drawCci();
drawTimeAxis();
```
